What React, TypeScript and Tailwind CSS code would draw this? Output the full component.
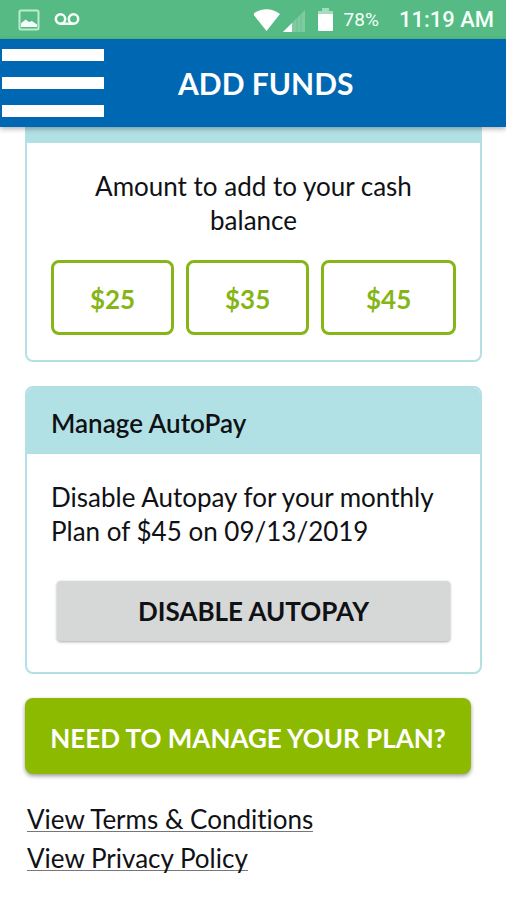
import type { ReactNode } from "react";

const amounts = ["$25", "$35", "$45"];

function StatusBar() {
  return (
    <div className="flex h-[39px] items-center justify-between bg-[#55ba83] pl-[18px] pr-3 font-[Roboto,sans-serif] text-[#f4fff8]">
      <div className="flex items-center gap-[14px]">
        <svg width="22" height="22" viewBox="0 0 22 22" fill="none" aria-hidden="true">
          <rect x="1.5" y="1.5" width="19" height="19" rx="1.5" stroke="#bdebd0" strokeWidth="2" />
          <path d="M3 18v-3.500q1-2 3-2.500l1.500-1.500L11 13l3-1 5 3.500V18z" fill="currentColor" />
        </svg>
        <svg width="26" height="16" viewBox="0 0 26 16" fill="none" stroke="currentColor" strokeWidth="2.500" aria-hidden="true">
          <circle cx="6.500" cy="7" r="4.700" />
          <circle cx="19.500" cy="7" r="4.700" />
          <path d="M6.500 11.700h13" />
        </svg>
      </div>
      <div className="flex items-center">
        <svg width="82" height="26" viewBox="0 0 82 26" fill="currentColor" aria-hidden="true">
          <path d="M-1 7C7 .5 18 .5 26 7L12.500 24z" fill="#fff" />
          <path d="M29 25 51 3v22z" fill="#7fcb9f" />
          <path d="M43 11v14M47 7v18" stroke="#68c18f" strokeWidth="1" />
          <path d="M29 25l9-9v9z" fill="#fff" />
          <path d="M68 1h7v3h4v3H64V4h4z" fill="#a5dcbc" />
          <path d="M64 7h15v16q0 1-1 1H65q-1 0-1-1z" fill="#fff" />
        </svg>
        <span className="ml-2 text-[19px] leading-6">78%</span>
        <span className="ml-5 text-[22px] font-medium leading-6">11:19 AM</span>
      </div>
    </div>
  );
}

function Header() {
  return (
    <header className="relative flex h-[88px] items-center bg-[#0067b3] shadow-[0_2px_5px_rgba(0,0,0,0.3)]">
      <button type="button" aria-label="Open menu" className="flex h-full w-[104px] flex-col justify-center gap-4 pl-0.5">
        <span className="h-3 bg-white" />
        <span className="h-3 bg-white" />
        <span className="h-3 bg-white" />
      </button>
      <h1 className="flex-1 pl-[74px] text-[30px] font-bold leading-8 text-white">ADD FUNDS</h1>
    </header>
  );
}

function Card({ title, children }: { title?: string; children: ReactNode }) {
  return (
    <section
      className={
        title
          ? "overflow-hidden rounded-lg border-2 border-[#b2e1e5]"
          : "overflow-hidden rounded-b-lg border-2 border-t-[16px] border-[#b2e1e5]"
      }
    >
      {title && <h2 className="bg-[#b2e1e5] px-6 pb-[14px] pt-[18px] text-[26px] font-semibold leading-[34px]">{title}</h2>}
      {children}
    </section>
  );
}

export default function App() {
  return (
    <div className="min-h-screen bg-white font-[Lato,sans-serif] text-[#101114] [font-variant-ligatures:none]">
      <StatusBar />
      <Header />
      <main className="px-6 pb-6">
        <div className="flex flex-col gap-6 pl-px">
          <Card>
            <div className="px-6 pb-[25px] pt-[26px]">
              <p className="text-center text-[26px] leading-[34px]">
                Amount to add to your cash
                <br />
                balance
              </p>
              <div className="mt-[23px] flex gap-3">
                {amounts.map((amount) => (
                  <button
                    key={amount}
                    type="button"
                    className="h-[75px] flex-1 rounded-lg border-[3px] border-[#85b517] pt-1 text-[26px] font-bold text-[#85b517] last:grow-[1.1]"
                  >
                    {amount}
                  </button>
                ))}
              </div>
            </div>
          </Card>
          <Card title="Manage AutoPay">
            <div className="px-6 pb-[31px] pt-[26px]">
              <p className="text-[26px] leading-[34px]">
                Disable Autopay for your monthly
                <br />
                Plan of $45 on 09/13/2019
              </p>
              <div className="mt-[33px] px-1.5">
                <button type="button" className="h-[60px] w-full rounded bg-[#d6d8d7] text-[26px] font-bold shadow-[0_1px_3px_rgba(0,0,0,0.35)]">
                  DISABLE AUTOPAY
                </button>
              </div>
            </div>
          </Card>
          <button type="button" className="mr-[11px] h-[76px] rounded-lg bg-[#8cba00] pt-1 text-[26px] font-bold text-white shadow-[0_2px_4px_rgba(0,0,0,0.4)]">
            NEED TO MANAGE YOUR PLAN?
          </button>
        </div>
        <nav className="mt-[33px] flex flex-col items-start gap-[14px] pl-[3px] text-[26px] leading-6">
          <a href="#terms" className="border-b border-[#777]">View Terms &amp; Conditions</a>
          <a href="#privacy" className="border-b border-[#777]">View Privacy Policy</a>
        </nav>
      </main>
    </div>
  );
}
